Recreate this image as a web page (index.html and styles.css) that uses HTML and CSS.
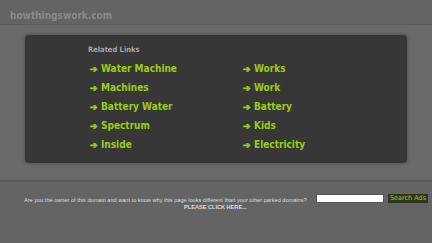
FILE: index.html
```html
<!DOCTYPE html>
<html lang="en">
<head>
  <meta charset="UTF-8" />
  <title>howthingswork.com</title>
  <link rel="stylesheet" href="styles.css">
</head>
<body>
  <div class="header">
    <div class="domain">howthingswork.com</div>
  </div>

  <div class="main">
    <div class="links-box">
      <div class="links-title">Related Links</div>
      <div class="links-grid">
        <a class="link" href="#"><span class="arrow">&#10132;</span>Water Machine</a>
        <a class="link" href="#"><span class="arrow">&#10132;</span>Works</a>
        <a class="link" href="#"><span class="arrow">&#10132;</span>Machines</a>
        <a class="link" href="#"><span class="arrow">&#10132;</span>Work</a>
        <a class="link" href="#"><span class="arrow">&#10132;</span>Battery Water</a>
        <a class="link" href="#"><span class="arrow">&#10132;</span>Battery</a>
        <a class="link" href="#"><span class="arrow">&#10132;</span>Spectrum</a>
        <a class="link" href="#"><span class="arrow">&#10132;</span>Kids</a>
        <a class="link" href="#"><span class="arrow">&#10132;</span>Inside</a>
        <a class="link" href="#"><span class="arrow">&#10132;</span>Electricity</a>
      </div>
    </div>
  </div>

  <div class="footer">
    <div class="owner-text">
      <div>Are you the owner of this domain and want to know why this page looks different than your other parked domains?</div>
      <div class="click-here">PLEASE CLICK HERE...</div>
    </div>
    <form class="search">
      <input type="text" class="search-input">
      <button type="button" class="search-btn">Search Ads</button>
    </form>
  </div>
</body>
</html>
```

FILE: styles.css
```css
body {
  margin: 0;
  padding: 0;
  background: #646464;
  font-family: "DejaVu Sans Condensed", "DejaVu Sans", sans-serif;
  width: 432px;
  height: 243px;
  overflow: hidden;
}

.header {
  height: 25px;
  border-bottom: 1px solid #5a5a5a;
  box-sizing: border-box;
  padding: 9px 0 0 10px;
}

.domain {
  color: #8a8a8a;
  font-weight: bold;
  font-size: 10px;
  line-height: 14px;
}

.main {
  height: 157px;
  background: #696969;
  border-bottom: 2px solid #5a5a5a;
  padding: 10px 25px 0 25px;
  box-sizing: border-box;
}

.links-box {
  background: #373737;
  height: 128px;
  border-radius: 4px;
  box-shadow: 0 0 3px 1px #555;
  padding: 10px 0 0 63px;
  box-sizing: border-box;
}

.links-title {
  color: #a8a8a8;
  font-size: 7.5px;
  font-weight: bold;
  line-height: 10px;
  margin-bottom: 4px;
}

.links-grid {
  display: grid;
  grid-template-columns: 153px 150px;
  grid-auto-rows: 19px;
  padding-left: 2px;
}

.link {
  color: #9fcb14;
  font-weight: bold;
  font-size: 10px;
  line-height: 19px;
  text-decoration: none;
}

.arrow {
  display: inline-block;
  width: 11px;
  font-family: "DejaVu Sans", sans-serif;
  font-size: 9px;
  -webkit-text-stroke: 0.6px #9fcb14;
}

.footer {
  display: flex;
  align-items: flex-start;
  padding: 12px 0 0 24px;
}

.owner-text {
  color: #dddddd;
  font-family: "Liberation Sans", sans-serif;
  font-size: 5.6px;
  line-height: 7px;
  width: 285px;
  white-space: nowrap;
  padding-top: 3px;
}

.click-here {
  font-weight: bold;
  padding-left: 160px;
}

.search {
  display: flex;
  gap: 4px;
  margin: 0;
  padding-left: 7px;
}

.search-input {
  width: 68px;
  height: 9px;
  border: 1px solid #555;
  padding: 0;
  background: #fff;
  box-sizing: border-box;
}

.search-btn {
  height: 9px;
  width: 40px;
  padding: 0;
  border: none;
  background: #33361f;
  color: #a2c33a;
  font-family: "DejaVu Sans", sans-serif;
  font-size: 6.5px;
  line-height: 9px;
}
```
